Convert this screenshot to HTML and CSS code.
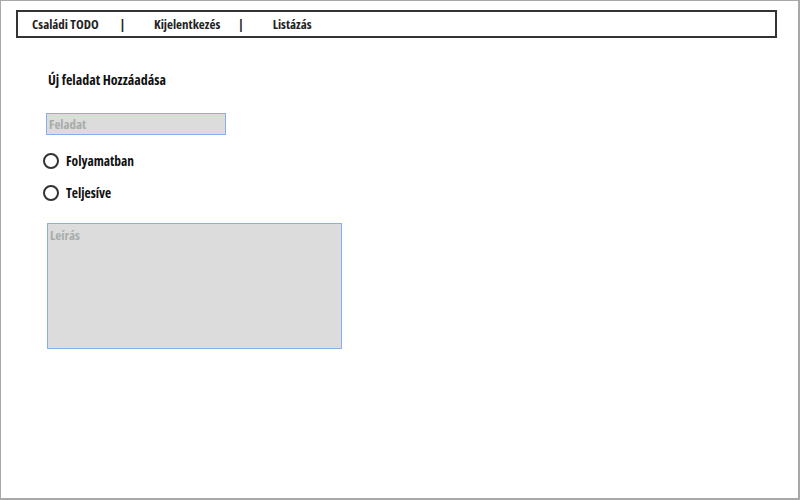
FILE: index.html
```html
<!DOCTYPE html>
<html lang="hu">
<head>
<meta charset="utf-8">
<title>Családi TODO</title>
<link rel="stylesheet" href="styles.css">
</head>
<body>
<div class="frame">
  <nav class="nav">
    <span class="nav-item first">Családi TODO</span>
    <span class="sep">|</span>
    <span class="nav-item">Kijelentkezés</span>
    <span class="sep sep-second">|</span>
    <span class="nav-item">Listázás</span>
  </nav>
  <main class="content">
    <h1 class="title">Új feladat Hozzáadása</h1>
    <input class="field" type="text" placeholder="Feladat">
    <label class="radio first-radio"><span class="dot"></span>Folyamatban</label>
    <label class="radio"><span class="dot"></span>Teljesíve</label>
    <textarea class="area" placeholder="Leírás"></textarea>
  </main>
</div>
</body>
</html>
```
FILE: styles.css
```css
* { box-sizing: border-box; }
html, body { margin: 0; padding: 0; background: #fff; }
body {
  font-family: "Open Sans", "Liberation Sans", sans-serif;
  font-stretch: 80%;
  font-weight: 700;
  color: #111;
}
.frame {
  width: 800px;
  height: 500px;
  border: 1px solid #a8a8a8;
  border-right-width: 2px;
  border-bottom-width: 2px;
  padding-top: 9px;
  padding-left: 15px;
}
.nav {
  width: 761px;
  height: 28px;
  border: 2px solid #333;
  display: flex;
  align-items: center;
  font-size: 13px;
  color: #222;
}
.nav-item.first { margin-left: 14px; }
.sep { margin: 0 29px 0 21px; color: #222; }
.sep.sep-second { margin: 0 29px 0 18px; }
.content {
  padding-left: 30px;
  display: flex;
  flex-direction: column;
  align-items: flex-start;
}
.title {
  font-size: 14px;
  line-height: 16px;
  margin: 34px 0 0 2px;
  color: #111;
}
.field {
  margin-top: 25px;
  width: 180px;
  height: 22px;
  border: 1px solid #8aabf5;
  background: #dcdcdc;
  padding: 0 2px;
  font: inherit;
  font-size: 13px;
  outline: none;
}
.field::placeholder, .area::placeholder { color: #a8acaa; opacity: 1; }
.radio {
  display: flex;
  align-items: center;
  height: 20px;
  margin-left: -3px;
  margin-top: 12px;
  font-size: 13.5px;
  color: #111;
}
.radio.first-radio { margin-top: 16px; }
.dot {
  width: 16px;
  height: 16px;
  border: 2.5px solid #333;
  border-radius: 50%;
  margin-right: 7px;
}
.area {
  margin-top: 20px;
  margin-left: 1px;
  width: 295px;
  height: 126px;
  border: 1px solid #8aabf5;
  background: #dcdcdc;
  padding: 2px 2px;
  font: inherit;
  font-size: 13px;
  resize: none;
  outline: none;
}
```
